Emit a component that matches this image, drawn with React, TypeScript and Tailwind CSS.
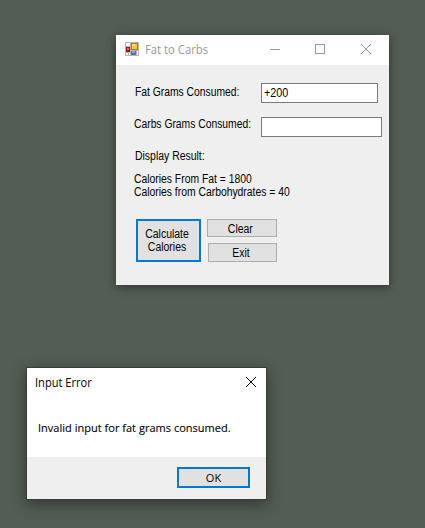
import type { ReactNode } from "react";

function Caption({ children, className }: { children: ReactNode; className: string }) {
  return (
    <div className={`w-max origin-left whitespace-nowrap text-[12px] leading-[13px] ${className}`}>{children}</div>
  );
}

function FormIcon() {
  return (
    <svg width="14" height="14" viewBox="0 0 14 14" shapeRendering="crispEdges">
      <rect width="14" height="14" fill="#b5b5b5" />
      <rect x="1" y="1" width="4" height="3" fill="#fff" />
      <rect x="1" y="11" width="2" height="2" fill="#fff" />
      <rect x="4" y="11" width="1" height="2" fill="#fff" />
      <rect x="12" y="9" width="1" height="4" fill="#fff" />
      <rect x="1" y="5" width="4" height="5" fill="#a90f0b" />
      <rect x="2" y="6" width="2" height="2" fill="#e26a5c" />
      <rect x="6" y="1" width="7" height="7" fill="#b07a08" />
      <rect x="7" y="2" width="5" height="5" fill="#fbc830" />
      <rect x="7" y="2" width="3" height="2" fill="#fde078" />
      <rect x="6" y="9" width="5" height="4" fill="#3c74d8" />
      <rect x="7" y="9" width="3" height="2" fill="#7caaf0" />
    </svg>
  );
}

function CloseIcon() {
  return (
    <svg width="10" height="10" viewBox="0 0 10 10" fill="none" stroke="currentColor">
      <path d="M0 0L10 10M10 0L0 10" />
    </svg>
  );
}

function CarbsWindow() {
  return (
    <section className="absolute left-[116px] top-[35px] h-[250px] w-[273px] bg-[#efefef] font-['Liberation_Sans',sans-serif] text-black shadow-[0_2px_9px_rgba(0,0,0,0.45)]">
      <header className="flex h-[30px] items-center bg-white pb-[2px] pl-[9px] text-[#999]">
        <FormIcon />
        <h1 className="ml-[6px] mt-[2px] w-[110px] origin-left scale-x-[0.94] whitespace-nowrap font-['Open_Sans',sans-serif] text-[12px] leading-4">
          Fat to Carbs
        </h1>
        <div className="ml-[15px] flex items-center">
          <span className="block h-px w-[10px] bg-[#999]" />
          <span className="ml-[35px] block size-[10px] border border-[#999]" />
          <span className="ml-[36px] block"><CloseIcon /></span>
        </div>
      </header>
      <div className="mt-[18px] flex h-[20px]">
        <div className="w-[145px] pl-[19px] pt-[3px]"><Caption className="scale-x-[0.86]">Fat Grams Consumed:</Caption></div>
        <div className="w-[117px] border border-[#7a7a7a] bg-white pl-[2px] pt-[3px]"><Caption className="scale-x-[0.9]">+200</Caption></div>
      </div>
      <div className="mt-[14px] flex h-[20px]">
        <div className="w-[145px] pl-[18px] pt-px"><Caption className="scale-x-[0.86]">Carbs Grams Consumed:</Caption></div>
        <div className="w-[121px] border border-[#7a7a7a] bg-white" />
      </div>
      <div className="pl-[19px] pt-[13px]"><Caption className="scale-x-[0.87]">Display Result:</Caption></div>
      <div className="pl-[18px] pt-[10px]">
        <Caption className="scale-x-[0.863]">Calories From Fat = 1800</Caption>
        <Caption className="scale-x-[0.863]">Calories from Carbohydrates = 40</Caption>
      </div>
      <div className="mt-[20px] flex pl-[20px]">
        <button className="flex h-[43px] w-[65px] flex-col items-center justify-center border-2 border-[#0078d7] bg-[#e1e1e1] pr-[2px]">
          <span className="scale-x-[0.87] whitespace-nowrap text-[12px] leading-[13px]">Calculate</span>
          <span className="scale-x-[0.87] whitespace-nowrap text-[12px] leading-[13px]">Calories</span>
        </button>
        <div className="ml-[6px] flex w-[70px] flex-col items-end gap-[6px]">
          <button className="flex h-[18px] w-[70px] items-center justify-center border border-[#adadad] bg-[#e1e1e1] pr-[3px] pt-[2px]">
            <span className="scale-x-[0.87] text-[12px] leading-[13px]">Clear</span>
          </button>
          <button className="flex h-[19px] w-[69px] items-center justify-center border border-[#adadad] bg-[#e1e1e1] pr-[2px] pt-[2px]">
            <span className="scale-x-[0.87] text-[12px] leading-[13px]">Exit</span>
          </button>
        </div>
      </div>
    </section>
  );
}

function ErrorDialog() {
  return (
    <section className="absolute left-[26px] top-[367px] flex h-[133px] w-[241px] flex-col border border-[#383d39] bg-white font-['Open_Sans',sans-serif] text-black shadow-[0_4px_14px_rgba(0,0,0,0.4)]">
      <header className="flex h-[29px] items-start justify-between pl-[8px] pr-[10px] pt-[9px]">
        <h2 className="-mt-[2px] origin-left scale-x-[0.925] whitespace-nowrap text-[12px] leading-4">Input Error</h2>
        <CloseIcon />
      </header>
      <div className="h-[60px] pl-[11px] pt-[23px]">
        <p className="w-max origin-left scale-x-[1.003] whitespace-nowrap text-[11px] leading-4 [-webkit-text-stroke:0.1px_black]">Invalid input for fat grams consumed.</p>
      </div>
      <footer className="flex flex-1 justify-end bg-[#efefef] pr-[16px] pt-[10px]">
        <button className="flex h-[21px] w-[73px] items-center justify-center border-2 border-[#0078d7] bg-[#e1e1e1] text-[11px] leading-4">
          OK
        </button>
      </footer>
    </section>
  );
}

export default function App() {
  return (
    <main className="relative h-[528px] w-[425px] overflow-hidden bg-[#525d53]">
      <CarbsWindow />
      <ErrorDialog />
    </main>
  );
}
